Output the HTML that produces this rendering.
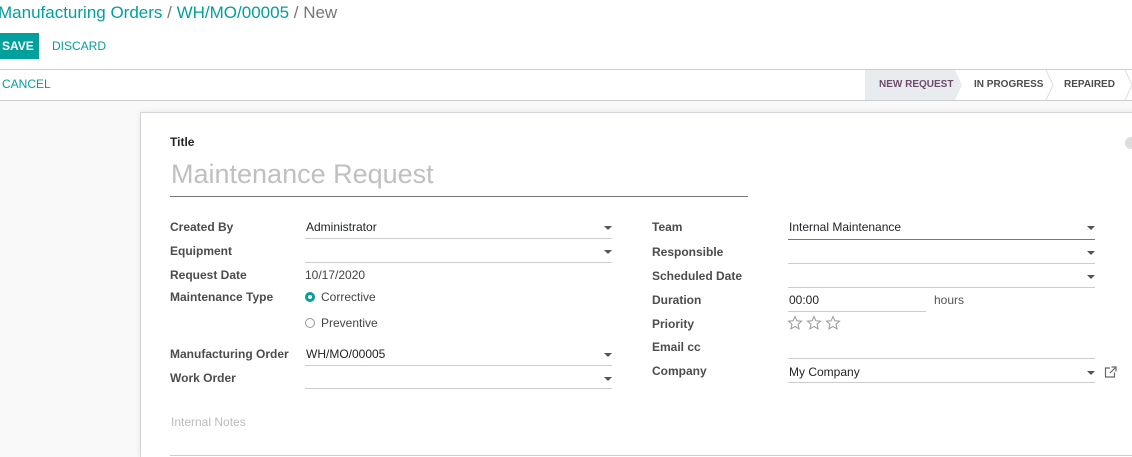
<!DOCTYPE html>
<html><head><meta charset="utf-8"><style>
*{margin:0;padding:0;box-sizing:border-box}
html{overflow:hidden;height:457px}
body{width:1132px;height:457px;overflow:hidden;position:relative;background:#fff;font-family:"Liberation Sans",sans-serif;font-size:12px;color:#212529}
.a{position:absolute;white-space:nowrap;line-height:16px}
.lb{font-weight:bold;color:#4c4c4c}
.ln{position:absolute;height:1px;background:#ccc}
.dd{position:absolute;width:0;height:0;border-left:4px solid transparent;border-right:4px solid transparent;border-top:4px solid #555}
.teal{color:#00A09D}
</style></head><body>
<div class="a teal" style="left:-2px;top:2px;font-size:17px;line-height:21px">Manufacturing Orders <span style="color:#777">/</span> WH/MO/00005 <span style="color:#777">/ New</span></div>
<div style="position:absolute;left:0;top:33px;width:39px;height:26px;background:#00A09D"></div>
<div class="a" style="left:2px;top:38px;color:#fff;font-weight:bold">SAVE</div>
<div class="a teal" style="left:52px;top:38px">DISCARD</div>
<div class="ln" style="left:0;top:69px;width:1132px;background:#ccc"></div>
<div class="a teal" style="left:2px;top:76px">CANCEL</div>
<div style="position:absolute;left:0;top:100px;width:1132px;height:357px;background:#f9f9f9;border-top:1px solid #ccc"></div>
<div style="position:absolute;left:865px;top:70px;width:90px;height:30px;background:#e9ecef"></div>
<svg style="position:absolute;left:950px;top:70px" width="182" height="31"><polygon points="0,0 5,0 12,15 5,30 0,30" fill="#e9ecef"/><polyline points="96,0 103,15 96,30" fill="none" stroke="#ddd"/><polyline points="175,0 182,15 175,30" fill="none" stroke="#ddd"/></svg>
<div class="a" style="left:879px;top:77px;font-size:10px;font-weight:bold;color:#6d4c6b">NEW REQUEST</div>
<div class="a" style="left:974px;top:77px;font-size:10px;font-weight:bold;color:#4c4c4c">IN PROGRESS</div>
<div class="a" style="left:1064px;top:77px;font-size:10px;font-weight:bold;color:#4c4c4c">REPAIRED</div>
<div style="position:absolute;left:140px;top:112px;width:1000px;height:345px;background:#fff;border:1px solid #d4d4d8;border-bottom:none;box-shadow:0 0 6px rgba(0,0,0,.08)"></div>
<div style="position:absolute;left:1125px;top:137px;width:12px;height:12px;border-radius:50%;background:#ddd"></div>
<div class="a" style="left:170px;top:134px;font-weight:bold;color:#222">Title</div>
<div class="a" style="left:171px;top:158px;font-size:27px;line-height:32px;color:#c0c0c0">Maintenance Request</div>
<div class="ln" style="left:170px;top:196px;width:578px;background:#777"></div>

<div class="a lb" style="left:170px;top:219px">Created By</div>
<div class="a" style="left:306px;top:219px">Administrator</div>
<div class="dd" style="left:604px;top:226px"></div><div class="ln" style="left:305px;top:238px;width:307px"></div>
<div class="a lb" style="left:170px;top:243px">Equipment</div>
<div class="dd" style="left:604px;top:250px"></div><div class="ln" style="left:305px;top:262px;width:307px"></div>
<div class="a lb" style="left:170px;top:267px">Request Date</div>
<div class="a" style="left:305px;top:267px;color:#444">10/17/2020</div>
<div class="a lb" style="left:170px;top:289px">Maintenance Type</div>
<div style="position:absolute;left:305px;top:292px;width:10px;height:10px;border-radius:50%;background:#00A09D"></div>
<div style="position:absolute;left:308px;top:295px;width:4px;height:4px;border-radius:50%;background:#fff"></div>
<div class="a" style="left:321px;top:289px;color:#444">Corrective</div>
<div style="position:absolute;left:305px;top:318px;width:10px;height:10px;border-radius:50%;border:1px solid #999"></div>
<div class="a" style="left:321px;top:315px;color:#444">Preventive</div>
<div class="a lb" style="left:170px;top:346px">Manufacturing Order</div>
<div class="a" style="left:306px;top:346px">WH/MO/00005</div>
<div class="dd" style="left:604px;top:353px"></div><div class="ln" style="left:305px;top:365px;width:307px"></div>
<div class="a lb" style="left:170px;top:370px">Work Order</div>
<div class="dd" style="left:604px;top:377px"></div><div class="ln" style="left:305px;top:388px;width:307px"></div>

<div class="a lb" style="left:652px;top:219px">Team</div>
<div class="a" style="left:789px;top:219px">Internal Maintenance</div>
<div class="dd" style="left:1087px;top:226px"></div><div class="ln" style="left:788px;top:239px;width:307px;background:#777"></div>
<div class="a lb" style="left:652px;top:244px">Responsible</div>
<div class="dd" style="left:1087px;top:251px"></div><div class="ln" style="left:788px;top:263px;width:307px"></div>
<div class="a lb" style="left:652px;top:268px">Scheduled Date</div>
<div class="dd" style="left:1087px;top:275px"></div><div class="ln" style="left:788px;top:287px;width:307px"></div>
<div class="a lb" style="left:652px;top:292px">Duration</div>
<div class="a" style="left:789px;top:292px">00:00</div>
<div class="ln" style="left:788px;top:311px;width:138px"></div>
<div class="a" style="left:934px;top:292px;color:#555">hours</div>
<div class="a lb" style="left:652px;top:316px">Priority</div>
<svg style="position:absolute;left:787px;top:315px" width="56" height="16" viewBox="0 0 56 16">
<g fill="none" stroke="#999" stroke-width="1"><path id="s" d="M8 1.5l1.9 4.3 4.6.4-3.5 3 1.1 4.6L8 11.4l-4.1 2.4 1.1-4.6-3.5-3 4.6-.4z"/><use href="#s" x="19"/><use href="#s" x="38"/></g></svg>
<div class="a lb" style="left:652px;top:339px">Email cc</div>
<div class="ln" style="left:788px;top:358px;width:307px"></div>
<div class="a lb" style="left:652px;top:363px">Company</div>
<div class="a" style="left:789px;top:364px">My Company</div>
<div class="dd" style="left:1087px;top:371px"></div><div class="ln" style="left:788px;top:382px;width:307px"></div>
<svg style="position:absolute;left:1104px;top:366px" width="13" height="12" viewBox="0 0 13 12"><path d="M6 2H1.5v9h9V6.5" fill="none" stroke="#666" stroke-width="1.2"/><path d="M7.5 1H12v4.5M12 1L6 7" fill="none" stroke="#666" stroke-width="1.2"/></svg>

<div class="a" style="left:171px;top:414px;color:#bbb">Internal Notes</div>
<div class="ln" style="left:170px;top:455px;width:962px"></div>
</body></html>
